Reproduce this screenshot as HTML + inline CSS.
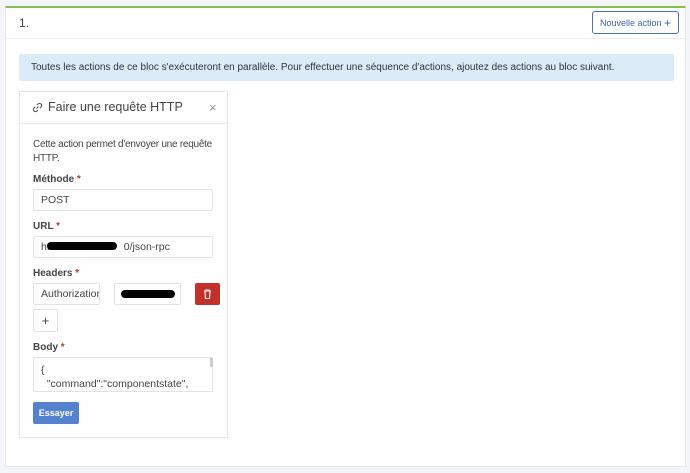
<!DOCTYPE html>
<html><head><meta charset="utf-8"><style>
*{box-sizing:border-box;margin:0;padding:0}
body{width:690px;height:473px;background:#f3f5f8;font-family:"Liberation Sans",sans-serif;color:#333;position:relative;overflow:hidden}
.abs{position:absolute}
.panel{left:5px;top:6px;width:681px;height:461px;background:#fff;border:1px solid #e6e8eb;border-top:2px solid #86bd4f}
.inp{position:absolute;border:1px solid #dfe2e6;border-radius:2px;background:#fff;font-size:10.5px;color:#444;padding-left:7px;display:flex;align-items:center}
.lbl{position:absolute;font-size:10px;font-weight:bold;color:#444}
.lbl b{color:#c0392b}
</style></head><body>
<div class="abs panel"></div>
<div class="abs" style="left:6px;top:38px;width:679px;height:1px;background:#eceef1"></div>
<div class="abs" style="left:19px;top:16px;font-size:12px;color:#444">1.</div>
<div class="abs" style="left:592px;top:11px;width:87px;height:23px;border:1px solid #4a72b8;border-radius:3px;font-size:9px;color:#3d66b0;display:flex;align-items:center;justify-content:center">Nouvelle action&nbsp;<span style="font-size:12px">+</span></div>
<div class="abs" style="left:19px;top:54px;width:655px;height:27px;background:#dcebf8;border-radius:2px;font-size:10px;color:#333;padding-left:12px;line-height:27px">Toutes les actions de ce bloc s'exécuteront en parallèle. Pour effectuer une séquence d'actions, ajoutez des actions au bloc suivant.</div>
<div class="abs" style="left:19px;top:91px;width:209px;height:347px;border:1px solid #e3e6ea;background:#fff"></div>
<div class="abs" style="left:20px;top:123px;width:207px;height:1px;background:#e6e8eb"></div>
<svg class="abs" style="left:32px;top:102px" width="11" height="11" viewBox="0 0 11 11" fill="none" stroke="#555" stroke-width="1.1"><path d="M4.5 6.5l2-2M5 3l1-1a2 2 0 0 1 3 3l-1 1M6 8l-1 1a2 2 0 0 1-3-3l1-1"/></svg>
<div class="abs" style="left:48px;top:100px;font-size:12.5px;color:#444">Faire une requête HTTP</div>
<div class="abs" style="left:209px;top:100px;font-size:13px;color:#999">×</div>
<div class="abs" style="left:33px;top:138px;width:195px;font-size:10px;letter-spacing:-0.25px;line-height:14px;color:#444;white-space:nowrap">Cette action permet d'envoyer une requête<br>HTTP.</div>
<div class="lbl" style="left:33px;top:174px">Méthode <b>*</b></div>
<div class="inp" style="left:33px;top:189px;width:180px;height:22px">POST</div>
<div class="lbl" style="left:33px;top:221px">URL <b>*</b></div>
<div class="inp" style="left:33px;top:236px;width:180px;height:22px">ht<span style="display:inline-block;width:74px"></span>0/json-rpc</div>
<div class="abs" style="left:47px;top:242px;width:70px;height:8px;background:#000;border-radius:4px"></div>
<div class="lbl" style="left:33px;top:268px">Headers <b>*</b></div>
<div class="inp" style="left:33px;top:283px;width:67px;height:22px;overflow:hidden;white-space:nowrap">Authorization</div>
<div class="inp" style="left:114px;top:283px;width:67px;height:22px"></div>
<div class="abs" style="left:121px;top:290px;width:54px;height:8px;background:#000;border-radius:4px"></div>
<div class="abs" style="left:195px;top:283px;width:25px;height:22px;background:#c4302b;border-radius:2px"></div>
<svg class="abs" style="left:203px;top:289px" width="9" height="10" viewBox="0 0 9 10" fill="none" stroke="#fff" stroke-width="1.1"><path d="M1 2h7M3 2V1h3v1M2 2.5l.5 7h4l.5-7"/></svg>
<div class="inp" style="left:33px;top:309px;width:25px;height:23px;padding:0;justify-content:center;font-size:13px">+</div>
<div class="lbl" style="left:33px;top:342px">Body <b>*</b></div>
<div class="inp" style="left:33px;top:357px;width:180px;height:35px;display:block;padding-top:5px;line-height:14px">{<br>&nbsp;&nbsp;"command":"componentstate",</div>
<div class="abs" style="left:210px;top:358px;width:3px;height:9px;background:#ccc"></div>
<div class="abs" style="left:33px;top:402px;width:46px;height:22px;background:#5482cf;border-radius:2px;color:#fff;font-size:9px;font-weight:bold;display:flex;align-items:center;justify-content:center">Essayer</div>
</body></html>
